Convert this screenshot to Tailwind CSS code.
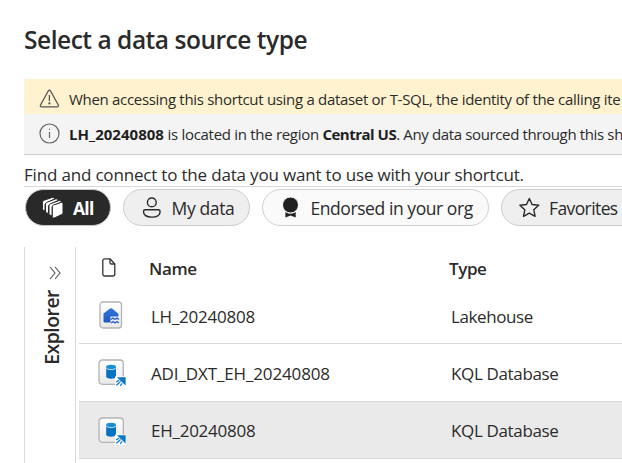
<!DOCTYPE html>
<html lang="en">
<head>
<meta charset="utf-8">
<title>Select a data source type</title>
<script src="https://cdn.jsdelivr.net/npm/@tailwindcss/browser@4"></script>
</head>
<body class="w-[622px] h-[463px] overflow-hidden bg-white text-[#2b2b2b] font-['Open_Sans','Noto_Sans',sans-serif] whitespace-nowrap">
<svg class="absolute w-0 h-0">
  <defs>
    <linearGradient id="tile" x1="0" y1="0" x2="0" y2="1"><stop offset="0" stop-color="#fff"/><stop offset="1" stop-color="#e9e9e9"/></linearGradient>
    <linearGradient id="house" x1="0" y1="0" x2="0" y2="1"><stop offset="0" stop-color="#2f77dc"/><stop offset="1" stop-color="#2456c4"/></linearGradient>
    <symbol id="kql" viewBox="0 0 28 28">
      <rect x="1" y="1" width="24.3" height="24.3" rx="3.2" fill="url(#tile)" stroke="#b3b3b3" stroke-width="1.3"/>
      <path d="M8.2 8v9.500c0 3 9.800 3 9.800 0V8z" fill="#0572c2"/>
      <ellipse cx="13.1" cy="8" rx="4.9" ry="2.2" fill="#1b8dd2"/>
      <path d="M8.200 9c1.800 2.200 8 2.200 9.800 0" fill="none" stroke="#fff" stroke-width=".8"/>
      <path d="M17 17.500h11V28H17z" fill="#fff"/>
      <path d="M19 18.300h8.600v8.200z" fill="#0877c5"/>
      <path d="M18.200 23l3-2M18.300 26.300l4.300-3.800M22.200 26.800l2-2.500" stroke="#0877c5" stroke-width="1.2"/>
    </symbol>
  </defs>
</svg>
<header class="h-[79px] pl-6 pt-6"><h1 class="text-[24.5px] leading-8 font-semibold tracking-[-0.47px]">Select a data source type</h1></header>
<section class="ml-6 text-[15px]">
  <div class="h-[35px] bg-[#fff2ce] flex pl-[15px] pt-[5px] overflow-hidden">
    <svg class="w-[21px] h-[21px] mt-1 shrink-0" viewBox="0 0 21 21" fill="none" stroke="#555" stroke-width="1.3" stroke-linejoin="round" stroke-linecap="round"><path d="M9.4 2.7 1.5 17c-.5.9 0 1.8.9 1.8h15.9c1 0 1.5-.9 1-1.8L11.4 2.7c-.5-.8-1.500-.8-2 0z"/><path d="M10.4 7.5v5"/><circle cx="10.4" cy="15.4" r=".5" fill="#555"/></svg>
    <p class="ml-[9px] leading-[31px] tracking-[-0.31px]">When accessing this shortcut using a dataset or T-SQL, the identity of the calling ite</p>
  </div>
  <div class="h-[41px] bg-[#f4f4f4] border-b border-[#cfcfcf] flex pl-[15px] pt-[5px] overflow-hidden">
    <svg class="w-[21px] h-[21px] mt-1 shrink-0" viewBox="0 0 21 21" fill="none" stroke="#666" stroke-width="1.2"><circle cx="10.5" cy="10.5" r="9.5"/><path d="M10.5 9v6"/><circle cx="10.5" cy="6.3" r=".7" fill="#666" stroke="none"/></svg>
    <p class="ml-[9px] leading-[31px] tracking-[-0.3px]"><b class="tracking-[0.02px] text-[#1f1f1f]">LH_20240808</b> is located in the region <b class="tracking-[-0.5px] text-[#1f1f1f]">Central US</b><span class="tracking-[-0.36px]">. Any data sourced through this sh</span></p>
  </div>
  <p class="h-8 leading-[39px] text-[17px] tracking-[-0.18px] border-b border-[#d9d9d9]">Find and connect to the data you want to use with your shortcut.</p>
</section>
<nav class="flex gap-3 ml-[25px] pt-[2px] h-[60px] text-[17.5px] leading-[37px]">
  <div class="w-[86px] h-[37px] rounded-full bg-[#292929] border border-[#ccc] text-white font-bold shrink-0 flex">
    <svg class="ml-4 mt-[7px] w-[22px] h-[22px] shrink-0" viewBox="0 0 22 22" fill="#fff" stroke="#292929" stroke-width="1"><path d="M.5 5.500c0-1.200.7-1.900 1.700-2.300L10 .5c1.200-.4 2.500.2 2.500 1.500L4.500 6c-1 .4-1.500 1-1.500 2v6l-1.500-.7c-.7-.4-1-.9-1-1.700z"/><path d="M3.500 7.500c0-1.200.6-1.900 1.700-2.300L13.500 2c1.300-.4 2.500.2 2.500 1.500L8 7.500C7 8 6.500 8.500 6.500 9.500v7.200l-2-1c-.7-.4-1-.9-1-1.700z"/><path d="M7 9c0-1.200.6-1.900 1.700-2.300l8-3c1.300-.4 2.500.2 2.500 1.500l-7.500 3.300c-1 .4-1.500 1-1.500 2v8.500L8 18.200c-.7-.4-1-.9-1-1.700z"/><path d="M11.500 8 18.800 5.600c1.300-.4 2.200.3 2.200 1.500v8.400c0 1-.5 1.600-1.300 2l-6.800 3.300c-1.500.7-2.600.1-2.600-1.400v-9.700c0-.8.4-1.400 1.200-1.700z"/></svg>
    <span class="ml-[9px] tracking-[-0.7px]">All</span>
  </div>
  <div class="w-[127px] h-[37px] rounded-full bg-[#efefef] border border-[#ccc] shrink-0 flex">
    <svg class="ml-[18px] mt-[7px] w-5 h-[22px] shrink-0" viewBox="0 0 20 22" fill="none" stroke="#292929" stroke-width="1.4"><circle cx="9.8" cy="5.4" r="4.4"/><path d="M3.200 12.800h13.200c1.200 0 1.700.6 1.700 1.600 0 3.700-3.500 5.700-8.300 5.700s-8.300-2-8.300-5.700c0-1 .5-1.600 1.700-1.600z"/></svg>
    <span class="ml-[9.5px] tracking-[-0.35px]">My data</span>
  </div>
  <div class="w-[227px] h-[37px] rounded-full bg-[#fafafa] border border-[#d1d1d1] shrink-0 flex">
    <svg class="ml-[19px] mt-[7px] w-4 h-[22px] shrink-0" viewBox="0 0 16 22" fill="#202020"><path d="M3.400 15c3 2 7.300 2 10.300 0v5.600l-5.100-2-5.200 2z"/><circle cx="8.500" cy="8" r="8" stroke="#fafafa"/></svg>
    <span class="ml-[12.5px] tracking-[-0.43px]">Endorsed in your org</span>
  </div>
  <div class="w-[140px] h-[37px] rounded-full bg-[#efefef] border border-[#ccc] shrink-0 flex">
    <svg class="ml-[16px] mt-[7px] w-[22px] h-[22px] shrink-0" viewBox="0 0 22 22" fill="none" stroke="#292929" stroke-width="1.4" stroke-linejoin="round"><path d="m11.300 1.500 2.800 6 6.600.8-4.900 4.500 1.300 6.500-5.800-3.200-5.800 3.200 1.300-6.500-4.900-4.500 6.600-.8z"/></svg>
    <span class="ml-[9px] tracking-[-0.6px]">Favorites</span>
  </div>
</nav>
<main class="ml-6 flex h-[216px] w-[598px]">
  <aside class="w-[52px] border-x border-[#d9d9d9] shrink-0 flex flex-col items-center pt-[19px]">
    <svg class="w-3 h-[14px] ml-[9px]" viewBox="0 0 12 14" fill="none" stroke="#555" stroke-width="1.1"><path d="m1 1 5 6-5 6M6 1l5 6-5 6"/></svg>
    <div class="mt-[10px] ml-[3px] [writing-mode:vertical-rl] rotate-180 text-[19.5px] leading-[28px] font-semibold tracking-[-0.55px]">Explorer</div>
  </aside>
  <div class="ml-[3px] flex-1 text-[17px]">
    <div class="grid grid-cols-[70px_300px_1fr] h-[39px] leading-[43px] font-semibold tracking-[-0.4px]">
      <svg class="ml-[23px] mt-[11px] w-[14px] h-[19px]" viewBox="0 0 14 19" fill="none" stroke="#333" stroke-width="1.3" stroke-linejoin="round"><path d="M2.800.8H8L12.800 6v10c0 1.200-.8 2-2 2h-8c-1.200 0-2-.8-2-2V2.800c0-1.200.8-2 2-2z"/><path d="M8 1v3.500C8 5.500 8.500 6 9.500 6h3"/></svg>
      <span>Name</span><span>Type</span>
    </div>
    <div class="grid grid-cols-[72px_300px_1fr] h-[58px] leading-[62px] border-b border-[#d9d9d9] tracking-[-0.25px]">
      <svg class="ml-5 mt-[15px] w-6 h-7" viewBox="0 0 24 28"><rect x="1" y="1" width="21.5" height="26" rx="3" fill="url(#tile)" stroke="#b3b3b3" stroke-width="1.3"/><path d="m4.500 12.500 6.500-5c.7-.5 1.300-.5 2 0l5.500 4.500c.7.5 1 1 1 2v7.500H6c-1 0-1.500-.5-1.500-1.500z" fill="url(#house)"/><path d="M11.500 15.500h9v8h-9z" fill="#f0f2f7"/><g fill="none" stroke="#2456c4" stroke-width="1.3"><path d="m12 18.500 2-1.500 2 1.500 2-1.500 2 1.500"/><path d="m12 22 2-1.500 2 1.500 2-1.500 2 1.500"/></g></svg>
      <span>LH_20240808</span><span class="tracking-[-0.4px]">Lakehouse</span>
    </div>
    <div class="grid grid-cols-[72px_300px_1fr] h-[58px] leading-[60px] border-b border-[#d9d9d9] tracking-[-0.25px]">
      <svg class="ml-[19px] mt-[15px] w-7 h-7"><use href="#kql"/></svg>
      <span class="tracking-[-0.13px]">ADI_DXT_EH_20240808</span><span class="tracking-[-0.35px]">KQL Database</span>
    </div>
    <div class="grid grid-cols-[72px_300px_1fr] h-[57px] leading-[58px] bg-[#eaeaea] border-b border-[#d9d9d9] tracking-[-0.25px]">
      <svg class="ml-[19px] mt-[15px] w-7 h-7"><use href="#kql"/></svg>
      <span>EH_20240808</span><span class="tracking-[-0.35px]">KQL Database</span>
    </div>
  </div>
</main>
</body>
</html>
